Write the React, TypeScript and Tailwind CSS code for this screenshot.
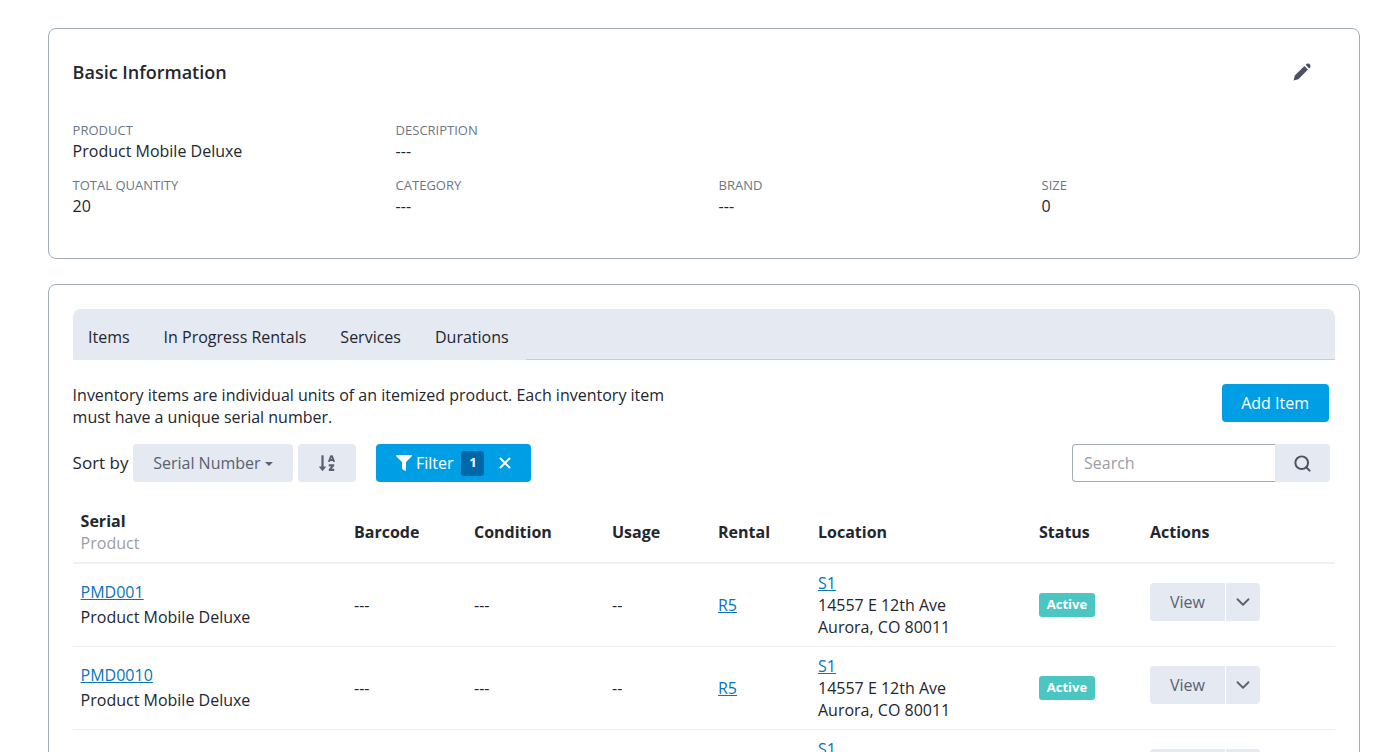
import React from "react";
import { FaFilter, FaSortAlphaDown } from "react-icons/fa";
import { ChevronDown, Search, X } from "lucide-react";

function Field({ label, value, className = "" }: { label: string; value: string; className?: string }) {
  return (
    <div className={className}>
      <div className="text-[13px] leading-[18px] text-[#6b7785]">{label}</div>
      <div className="text-[16px] leading-[25px] text-[#23262f]">{value}</div>
    </div>
  );
}

function Row({ serial }: { serial: string }) {
  return (
    <tr className="border-b border-[#edf0f4] text-[16px] text-[#23262f] align-middle">
      <td className="px-2 h-[83px]">
        <a className="block text-[#0b74b8] underline leading-[25px]">{serial}</a>
        <div className="leading-[25px]">Product Mobile Deluxe</div>
      </td>
      <td className="px-2">---</td>
      <td className="px-2">---</td>
      <td className="px-2">--</td>
      <td className="px-2"><a className="text-[#0b74b8] underline">R5</a></td>
      <td className="px-2 leading-[22px]">
        <a className="block text-[#0b74b8] underline">S1</a>
        <div>14557 E 12th Ave</div>
        <div>Aurora, CO 80011</div>
      </td>
      <td className="px-2">
        <span className="flex items-center justify-center w-[56px] h-[24px] rounded-[3px] bg-[#4bc6c2] text-white text-[13px] font-bold">Active</span>
      </td>
      <td className="px-2">
        <div className="flex h-[38px] -mt-[5px] text-[#5a6170]">
          <button className="w-[75px] bg-[#e5e9f1] rounded-l-[4px] text-[16px]">View</button>
          <button className="ml-px w-[34px] bg-[#e5e9f1] rounded-r-[4px] flex items-center justify-center">
            <ChevronDown size={22} strokeWidth={2} />
          </button>
        </div>
      </td>
    </tr>
  );
}

export default function App() {
  return (
    <div className="h-screen overflow-hidden bg-white pl-12 pr-[22px] pt-7 font-['Open_Sans',sans-serif] text-[#23262f]">
      <section className="border border-[#a3adb8] rounded-[8px] h-[231px] pl-[23.6px] pr-6 pt-[29px]">
        <div className="flex justify-between items-start">
          <h2 className="text-[18px] leading-[28px] font-semibold text-[#23262f]">Basic Information</h2>
          <svg width="18" height="18" viewBox="0 0 18 18" className="mr-[24px] mt-[5px] text-[#4d5260]" fill="currentColor">
            <path d="M0.6 17.4 L1.8 12.6 L11.4 3 L15 6.6 L5.4 16.2 Z" />
            <path d="M12.6 1.8 L13.8 0.8 Q15 0 16.2 0.8 L17.2 1.8 Q18 3 17.2 4.2 L16.2 5.4 Z" />
          </svg>
        </div>
        <div className="mt-[35px] grid grid-cols-[323px_323px_323px_1fr] gap-y-[12.4px]">
          <Field label="PRODUCT" value="Product Mobile Deluxe" />
          <Field className="col-span-3" label="DESCRIPTION" value="---" />
          <Field label="TOTAL QUANTITY" value="20" />
          <Field label="CATEGORY" value="---" />
          <Field label="BRAND" value="---" />
          <Field label="SIZE" value="0" />
        </div>
      </section>

      <section className="mt-[25px] border border-[#a3adb8] rounded-[8px] pl-[23.6px] pr-6 pt-6 h-[600px]">
        <nav className="flex h-[51px] w-[1262px] bg-[#e5e9f1] rounded-t-[8px] text-[16px] text-[#23262f]">
          <span className="pl-[15.4px] pr-[17px] pt-[16px]">Items</span>
          <span className="px-[17px] pt-[16px]">In Progress Rentals</span>
          <span className="px-[17px] pt-[16px]">Services</span>
          <span className="px-[17px] pt-[16px]">Durations</span>
          <span className="flex-1 border-b border-[#c9cdd3]"></span>
        </nav>

        <div className="flex justify-between items-start w-[1256px] h-[38px] mt-6">
          <p className="w-[600px] text-[16px] leading-[22px]">
            Inventory items are individual units of an itemized product. Each inventory item must have a unique serial number.
          </p>
          <button className="h-[38px] w-[107px] rounded-[4px] bg-[#009ee5] text-white text-[16px] font-medium">Add Item</button>
        </div>

        <div className="flex items-center mt-[22px] h-[38px]">
          <span className="text-[17px] mr-[4.4px]">Sort by</span>
          <button className="h-[38px] w-[160px] rounded-[4px] bg-[#e5e9f1] text-[16px] text-[#5a6170] flex items-center justify-center gap-[4px]">
            Serial Number
            <span className="w-0 h-0 border-x-[4px] border-x-transparent border-t-[4px] border-t-[#5a6170] mt-[2px]"></span>
          </button>
          <button className="ml-[5px] h-[38px] w-[58px] rounded-[4px] bg-[#e5e9f1] text-[#5a6170] flex items-center justify-center">
            <FaSortAlphaDown size={18} />
          </button>
          <button className="ml-5 h-[38px] w-[155px] rounded-[4px] bg-[#009ee5] text-white text-[16px] flex items-center pl-5">
            <FaFilter size={16} className="mr-[4px]" />
            Filter
            <span className="ml-2 w-[23px] h-[25px] rounded-[3px] bg-[#0068a9] text-[13px] font-bold flex items-center justify-center">1</span>
            <X size={18} strokeWidth={2.5} className="ml-3" />
          </button>
          <div className="ml-auto mr-[5px] flex h-[38px]">
            <input
              placeholder="Search"
              className="w-[203px] h-[38px] border border-r-0 border-[#a3adb8] rounded-l-[4px] pl-[11px] pr-3 text-[16px] placeholder:text-[#9a9ea6] outline-none"
            />
            <button className="w-[55px] bg-[#e5e9f1] rounded-r-[4px] flex items-center justify-center text-[#4d5260]">
              <Search size={19} strokeWidth={2.5} />
            </button>
          </div>
        </div>

        <table className="mt-[20px] w-[1262px] table-fixed border-collapse">
          <colgroup>
            <col className="w-[273.4px]" />
            <col className="w-[120px]" />
            <col className="w-[138px]" />
            <col className="w-[106px]" />
            <col className="w-[100px]" />
            <col className="w-[221px]" />
            <col className="w-[111px]" />
            <col />
          </colgroup>
          <thead>
            <tr className="border-b-2 border-[#edf0f4] text-left text-[16px] font-bold align-middle">
              <th className="px-2 h-[61px] font-bold leading-[22px]">
                Serial
                <div className="font-normal text-[#9a9ea6]">Product</div>
              </th>
              <th className="px-2 font-bold">Barcode</th>
              <th className="px-2 font-bold">Condition</th>
              <th className="px-2 font-bold">Usage</th>
              <th className="px-2 font-bold">Rental</th>
              <th className="px-2 font-bold">Location</th>
              <th className="px-2 font-bold">Status</th>
              <th className="px-2 font-bold">Actions</th>
            </tr>
          </thead>
          <tbody>
            <Row serial="PMD001" />
            <Row serial="PMD0010" />
            <Row serial="PMD0011" />
          </tbody>
        </table>
      </section>
    </div>
  );
}
